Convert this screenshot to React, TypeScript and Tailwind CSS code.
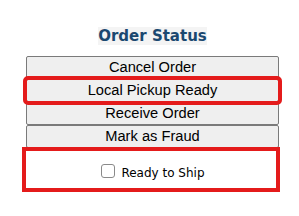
import React from "react";

const btn =
  "block w-full h-[23px] bg-[#efefef] border border-[#7a7a7a] rounded-[2px] text-[14.67px] leading-[17px] text-black text-center font-['Liberation_Sans',Arial,sans-serif] p-0";

export default function App() {
  return (
    <div className="w-[299px] h-[216px] bg-white overflow-hidden">
      <div className="ml-[26px] w-[253px] pt-[27px]">
        <div className="text-center leading-[17px] h-[17px]">
          <span className="bg-[#f4f4f4] font-bold text-[15px] text-[#1b4870] font-['DejaVu_Sans',Verdana,sans-serif]">
            Order Status
          </span>
        </div>
        <div className="mt-[12px] flex flex-col">
          <button className={btn}>Cancel Order</button>
          <button className={btn + " relative z-10 outline-4 outline-[#e41b1b] outline-offset-[-1px]"}>
            Local Pickup Ready
          </button>
          <button className={btn}>Receive Order</button>
          <button className={btn}>Mark as Fraud</button>
        </div>
        <div className="mt-[3px] w-[250px] h-[37px] outline-4 outline-[#e41b1b] flex items-center justify-center pt-[2px] pl-[4px]">
          <label className="flex items-center text-[12px] text-black font-['DejaVu_Sans',Verdana,sans-serif]">
            <input
              type="checkbox"
              className="appearance-none w-[14px] h-[14px] m-0 mr-[6px] bg-white border-[1.5px] border-[#8a8a8a] rounded-[3px]"
            />
            <span className="pt-[4px]">Ready to Ship</span>
          </label>
        </div>
      </div>
    </div>
  );
}
